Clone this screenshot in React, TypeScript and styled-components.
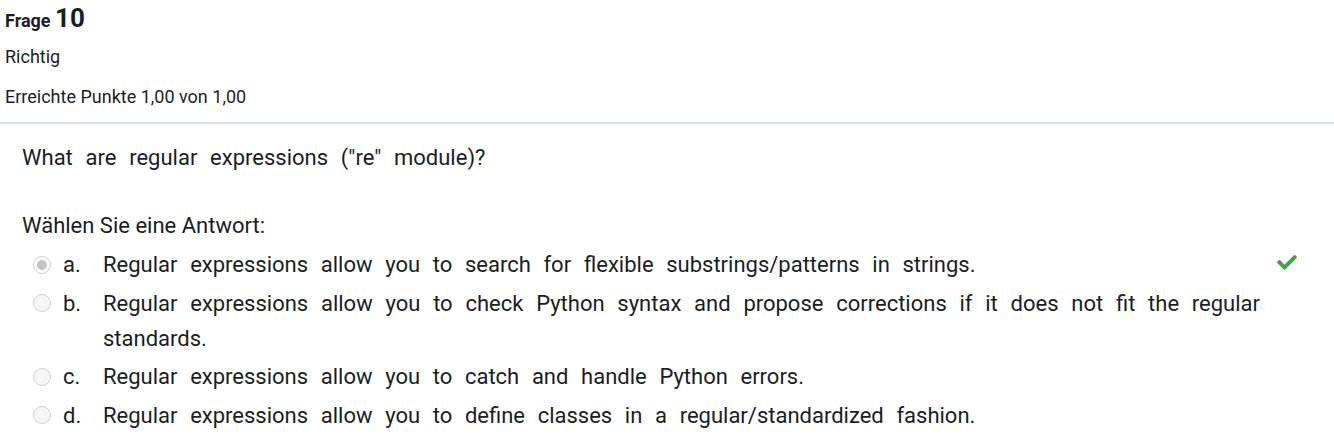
import React from "react";
import styled, { createGlobalStyle } from "styled-components";

const GlobalStyle = createGlobalStyle`
  html, body { margin: 0; padding: 0; background: #ffffff; }
  body {
    font-family: Roboto, "Liberation Sans", sans-serif;
    color: #1a1e22;
  }
`;

const Page = styled.div`
  width: 1334px;
  height: 448px;
  overflow: hidden;
  background: #fff;
`;

const Info = styled.div`
  padding: 0 5px 12px;
  border-bottom: 2px solid #d8e0e7;
`;

const Heading = styled.h3`
  margin: 0;
  font-size: 18px;
  font-weight: 700;
  line-height: 36px;
  height: 36px;
`;

const QNo = styled.span`
  font-size: 26px;
  font-weight: 700;
`;

const InfoLine = styled.div<{ $top: number }>`
  margin-top: ${(p) => p.$top}px;
  font-size: 18px;
  line-height: 27px;
`;

const Content = styled.div`
  padding: 16px 0 0 22px;
`;

const QText = styled.div`
  font-size: 22px;
  line-height: 35px;
  word-spacing: 7.3px;
`;

const Prompt = styled.div`
  margin-top: 33px;
  font-size: 22px;
  line-height: 35px;
`;

const Answers = styled.div`
  margin-top: 4px;
  display: flex;
  flex-direction: column;
  gap: 3.6px;
`;

const Row = styled.div`
  display: flex;
  align-items: flex-start;
  padding-left: 11px;
  font-size: 22px;
  line-height: 35px;
`;

const Radio = styled.span<{ $checked?: boolean }>`
  box-sizing: border-box;
  flex: 0 0 auto;
  width: 18px;
  height: 18px;
  margin-top: 8.5px;
  margin-right: 12px;
  border-radius: 50%;
  border: 1.5px solid #d0d0d0;
  background: ${(p) => (p.$checked ? "#fdfdfd" : "#f6f6f6")};
  display: flex;
  align-items: center;
  justify-content: center;
  &::after {
    content: "";
    display: ${(p) => (p.$checked ? "block" : "none")};
    width: 10px;
    height: 10px;
    border-radius: 50%;
    background: #c4c4c4;
  }
`;

const Letter = styled.span`
  flex: 0 0 40px;
`;

const AnswerText = styled.span`
  flex: 1 1 auto;
  text-align: justify;
  word-spacing: 7.2px;
`;

const IconSlot = styled.span`
  flex: 0 0 74px;
  display: flex;
  padding-left: 17px;
  padding-top: 7px;
  box-sizing: border-box;
`;

const Check = () => (
  <svg width="20" height="16" viewBox="0 0 512 410" fill="#44a047">
    <path d="M173.898 399.404l-166.4-166.4c-9.997-9.997-9.997-26.206 0-36.204l36.203-36.204c9.997-9.998 26.207-9.998 36.204 0L192 272.69 432.095 32.596c9.997-9.997 26.207-9.997 36.204 0l36.203 36.204c9.997 9.997 9.997 26.206 0 36.204l-294.4 294.401c-9.998 9.997-26.207 9.997-36.204-.001z" />
  </svg>
);

const answers = [
  {
    l: "a.",
    t: "Regular expressions allow you to search for flexible substrings/patterns in strings.",
    checked: true,
    correct: true,
  },
  {
    l: "b.",
    t: "Regular expressions allow you to check Python syntax and propose corrections if it does not fit the regular standards.",
  },
  { l: "c.", t: "Regular expressions allow you to catch and handle Python errors." },
  { l: "d.", t: "Regular expressions allow you to define classes in a regular/standardized fashion." },
];

export default function App() {
  return (
    <Page>
      <GlobalStyle />
      <Info>
        <Heading>
          Frage <QNo>10</QNo>
        </Heading>
        <InfoLine $top={7}>Richtig</InfoLine>
        <InfoLine $top={13}>Erreichte Punkte 1,00 von 1,00</InfoLine>
      </Info>
      <Content>
        <QText>What are regular expressions ("re" module)?</QText>
        <Prompt>Wählen Sie eine Antwort:</Prompt>
        <Answers>
          {answers.map((a) => (
            <Row key={a.l}>
              <Radio $checked={a.checked} />
              <Letter>{a.l}</Letter>
              <AnswerText>{a.t}</AnswerText>
              <IconSlot>{a.correct ? <Check /> : null}</IconSlot>
            </Row>
          ))}
        </Answers>
      </Content>
    </Page>
  );
}
